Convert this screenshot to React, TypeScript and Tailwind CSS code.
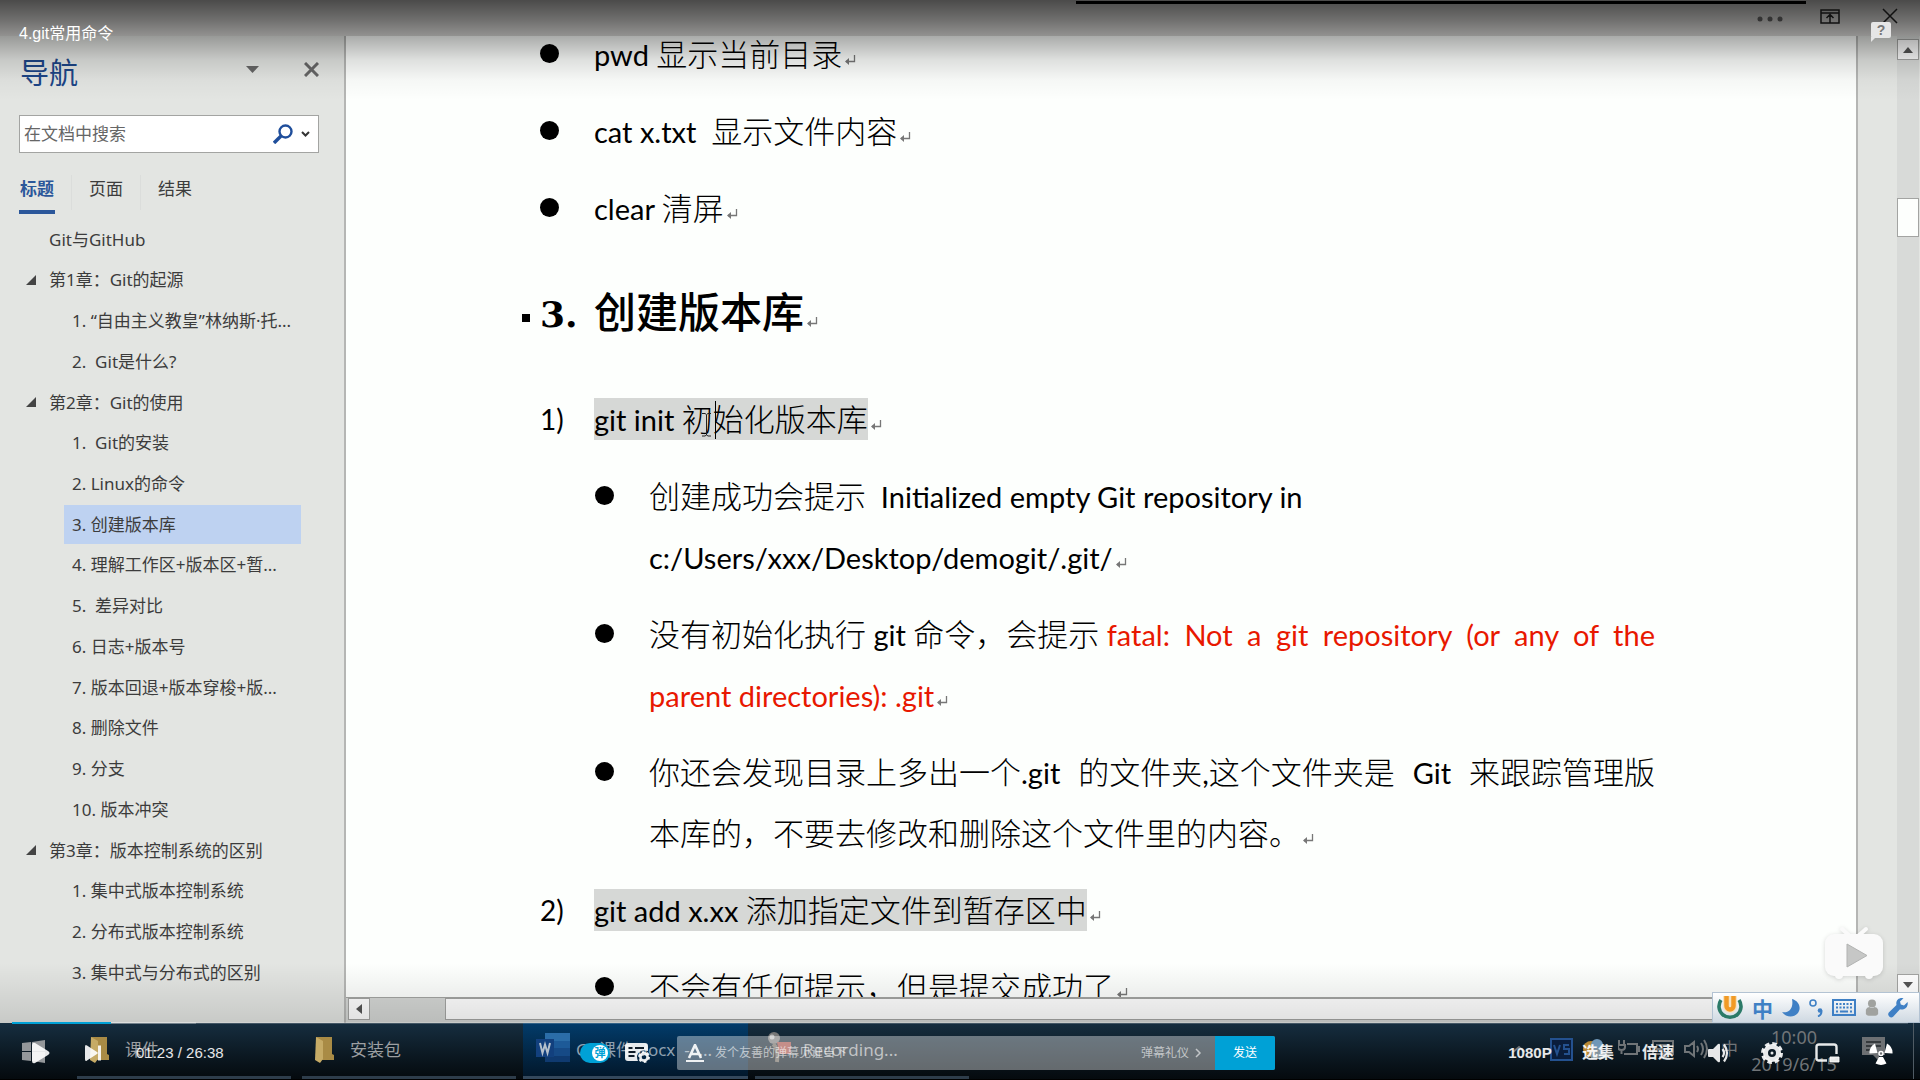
import type { ReactNode } from "react";

type Heading = { level: 1 | 2; text: string; open?: boolean; active?: boolean };

const headings: Heading[] = [
  { level: 1, text: "Git与GitHub" },
  { level: 1, text: "第1章：Git的起源", open: true },
  { level: 2, text: "1. “自由主义教皇”林纳斯·托..." },
  { level: 2, text: "2.  Git是什么?" },
  { level: 1, text: "第2章：Git的使用", open: true },
  { level: 2, text: "1.  Git的安装" },
  { level: 2, text: "2. Linux的命令" },
  { level: 2, text: "3. 创建版本库", active: true },
  { level: 2, text: "4. 理解工作区+版本区+暂..." },
  { level: 2, text: "5.  差异对比" },
  { level: 2, text: "6. 日志+版本号" },
  { level: 2, text: "7. 版本回退+版本穿梭+版..." },
  { level: 2, text: "8. 删除文件" },
  { level: 2, text: "9. 分支" },
  { level: 2, text: "10. 版本冲突" },
  { level: 1, text: "第3章：版本控制系统的区别", open: true },
  { level: 2, text: "1. 集中式版本控制系统" },
  { level: 2, text: "2. 分布式版本控制系统" },
  { level: 2, text: "3. 集中式与分布式的区别" },
];

function ReturnMark() {
  return (
    <svg className="ml-0.5 inline-block align-baseline" width="12" height="12" viewBox="0 0 12 12" fill="none" stroke="#777" strokeWidth="1.3" aria-hidden="true">
      <path d="M10.5 1v6.5H2" />
      <path d="M5 4 1 7.5 5 11z" fill="#777" stroke="none" />
    </svg>
  );
}

function En({ children }: { children: ReactNode }) {
  return <span className="text-[29px] leading-none whitespace-pre-wrap">{children}</span>;
}

function Dot({ children, nested }: { children: ReactNode; nested?: boolean }) {
  return (
    <li className={nested ? "flex pl-[55px]" : "flex"}>
      <span className="flex h-[58px] w-[54px] shrink-0 items-center">
        <span className="size-[19px] rounded-full bg-black" />
      </span>
      <div className="min-w-0 flex-1 whitespace-nowrap">{children}</div>
    </li>
  );
}

function Numbered({ n, children }: { n: string; children: ReactNode }) {
  return (
    <li className="flex h-[61px]">
      <span className="w-[54px] shrink-0 text-[28px]">{n}</span>
      <div className="whitespace-nowrap">{children}</div>
    </li>
  );
}

function Sidebar() {
  return (
    <aside className="flex w-[346px] shrink-0 flex-col border-r-2 border-[#b5b6b4] bg-[#e3e5e2] font-['Noto_Sans','Noto_Sans_CJK_SC',sans-serif] text-[17px] text-[#3c3c3c]">
      <div className="flex items-center pt-4 pr-[25px] pl-5">
        <h2 className="flex-1 text-[29px] leading-[42px] text-[#1c4587]">导航</h2>
        <button aria-label="选项" className="mb-1.5 mr-[45px]">
          <svg width="13" height="8" viewBox="0 0 13 8" fill="#666"><path d="M0 0h13L6.500 7z" /></svg>
        </button>
        <button aria-label="关闭" className="mb-2">
          <svg width="15" height="15" viewBox="0 0 15 15" stroke="#666" strokeWidth="3"><path d="m1 1 13 13M14 1 1 14" /></svg>
        </button>
      </div>
      <div className="mt-[21px] mr-[25px] ml-[19px] flex h-[38px] items-center border border-[#a3a4a2] bg-white pr-2 pl-1">
        <input aria-label="在文档中搜索" placeholder="在文档中搜索" className="min-w-0 flex-1 bg-transparent outline-none placeholder:text-[#666]" />
        <button aria-label="搜索">
          <svg width="20" height="20" viewBox="0 0 20 20" fill="none" stroke="#1f4e9b"><circle cx="12.500" cy="7.500" r="6" strokeWidth="2.400" /><path d="m8 12-7 7" strokeWidth="3.400" /></svg>
        </button>
        <button aria-label="搜索选项" className="ml-2">
          <svg width="9" height="7" viewBox="0 0 9 7" fill="none" stroke="#333" strokeWidth="2"><path d="m1 1 3.500 3.500L8 1" /></svg>
        </button>
      </div>
      <div role="tablist" className="mt-[22px] flex pl-[19px]">
        <button role="tab" aria-selected="true" className="h-[39px] w-9 border-b-4 border-[#2b579a] pb-2 font-bold text-[#2b579a]">标题</button>
        <button role="tab" aria-selected="false" className="ml-4 h-[35px] border-x border-[#dbdddb] px-[17px] pb-2">页面</button>
        <button role="tab" aria-selected="false" className="h-[35px] px-[17px] pb-2">结果</button>
      </div>
      <ul className="mt-[5px] mb-[30px] flex flex-1 flex-col">
        {headings.map((h) => (
          <li key={h.text} className="flex flex-1 items-center">
            {h.level === 1 ? (
              <a href="#doc" className="flex items-center whitespace-pre">
                <span className="flex w-[49px] pl-[26px]">
                  {h.open && <svg width="10" height="10" viewBox="0 0 10 10" fill="#444"><path d="M10 0v10H0z" /></svg>}
                </span>
                {h.text}
              </a>
            ) : (
              <a href="#doc" className={h.active ? "ml-16 flex h-[39px] w-[237px] items-center bg-[#bed2f1] pl-2 whitespace-pre" : "ml-16 pl-2 whitespace-pre"}>
                {h.text}
              </a>
            )}
          </li>
        ))}
      </ul>
    </aside>
  );
}

function Doc() {
  return (
    <main id="doc" className="min-h-0 flex-1 overflow-hidden bg-[#fdfffd] pr-[201px] pl-[194px] font-['Lato','Noto_Sans_CJK_SC',sans-serif] text-[31px] leading-[61px] font-light text-black [&_span]:font-normal">
      <div className="-mt-3">
        <ul className="flex flex-col gap-4">
          <Dot><En>pwd </En>显示当前目录<ReturnMark /></Dot>
          <Dot><En>cat x.txt  </En>显示文件内容<ReturnMark /></Dot>
          <Dot><En>clear </En>清屏<ReturnMark /></Dot>
        </ul>
        <h1 className="mt-4 -ml-[18px] flex h-[118px] items-center font-['Liberation_Serif','Noto_Sans_CJK_SC',serif] text-[42px] leading-[118px] font-bold">
          <span className="mt-2 mr-[10px] size-2 bg-black" />
          <span className="w-[54px] font-['DejaVu_Serif',serif] text-[36px] font-bold!">3.</span>
          <div className="font-medium">创建版本库<ReturnMark /></div>
        </h1>
        <ol className="mt-4 flex flex-col gap-4">
          <Numbered n="1)">
            <mark className="relative inline-block bg-[#d6d8d6] leading-[42px] text-black">
              <En>git init </En>初
              <i className="absolute top-[3px] left-[121px] h-[38px] w-px bg-black" />
              <svg className="absolute top-[15px] left-[108px]" width="9" height="24" viewBox="0 0 9 24" fill="none" stroke="#222"><path d="M0 .5h3l1.500 1 1.500-1h3M4.500 2v20M0 23h3l1.500-1 1.500 1h3" /></svg>
              始化版本库
            </mark>
            <ReturnMark />
          </Numbered>
          <Dot nested>
            创建成功会提示<En>  Initialized empty Git repository in</En><br />
            <En>c:/Users/xxx/Desktop/demogit/.git/</En><ReturnMark />
          </Dot>
          <Dot nested>
            <div className="flex">
              <div className="whitespace-pre">没有初始化执行<En> git </En>命令，会提示<En> </En></div>
              <div className="flex-1 text-[29px] font-normal whitespace-normal text-[#e81800] [text-align-last:justify]">fatal: Not a git repository (or any of the</div>
            </div>
            <span className="text-[#e81800]"><En>parent directories): .git</En></span><ReturnMark />
          </Dot>
          <Dot nested>
            <div className="flex justify-between">
              <div>你还会发现目录上多出一个<En>.git</En></div>
              <div>的文件夹<En>,</En>这个文件夹是</div>
              <div><En>Git</En></div>
              <div>来跟踪管理版</div>
            </div>
            本库的，不要去修改和删除这个文件里的内容。<ReturnMark />
          </Dot>
          <Numbered n="2)">
            <mark className="inline-block bg-[#d6d8d6] leading-[42px] text-black"><En>git add x.xx </En>添加指定文件到暂存区中</mark>
            <ReturnMark />
          </Numbered>
          <Dot nested>不会有任何提示，但是提交成功了<ReturnMark /></Dot>
        </ol>
      </div>
    </main>
  );
}

function VerticalScroll() {
  return (
    <div className="flex w-[64px] shrink-0 justify-end border-l-2 border-[#b5b6b4] bg-[#e3e5e2] pr-px">
      <div className="flex w-[22px] flex-col bg-[#d8dad8]">
        <button aria-label="向上滚动" className="mt-[3px] flex h-[21px] items-center justify-center border border-[#a3a4a2] bg-white">
          <svg width="10" height="6" viewBox="0 0 10 6" fill="#555"><path d="m5 0 5 6H0z" /></svg>
        </button>
        <div className="mt-[138px] h-[39px] border border-[#a3a4a2] bg-[#fdfffd]" />
        <div className="flex-1" />
        <button aria-label="向下滚动" className="mb-[28px] flex h-[21px] items-center justify-center border border-[#a3a4a2] bg-white">
          <svg width="10" height="6" viewBox="0 0 10 6" fill="#555"><path d="m0 0h10L5 6z" /></svg>
        </button>
      </div>
    </div>
  );
}

function ImeBar() {
  return (
    <div className="absolute right-0 bottom-[57px] flex h-[31px] w-[208px] items-center justify-between border border-[#b3c3d3] bg-linear-to-b from-white to-[#cfd9e2] pr-[11px] pl-1 text-[#3f80c5]">
      <svg width="26" height="26" viewBox="0 0 26 26" fill="none">
        <path d="M4 5a11 11 0 1 0 18 0" stroke="#2b7a68" strokeWidth="3.600" />
        <path d="M9.500 1v10a3.500 3.500 0 0 0 7 0V1" stroke="#f7e3c0" strokeWidth="7" />
        <path d="M9.500 1v10a3.500 3.500 0 0 0 7 0V1" stroke="#f19a26" strokeWidth="4.500" />
      </svg>
      <span className="font-['Noto_Sans_CJK_SC',sans-serif] text-[21px] leading-6 font-bold">中</span>
      <svg width="18" height="18" viewBox="0 0 18 18" fill="currentColor"><path d="M10 0c7 2 10 9 5.500 14.500C11.500 19 4 18.500 0 13c6 1.500 12-3 10-13z" /></svg>
      <svg width="14" height="18" viewBox="0 0 14 18" fill="none" stroke="currentColor"><circle cx="4" cy="4" r="3" strokeWidth="1.600" /><circle cx="11" cy="11.500" r="2.300" fill="currentColor" stroke="none" /><path d="M12.500 11.500q.500 4-3.500 6" strokeWidth="1.800" /></svg>
      <svg width="24" height="17" viewBox="0 0 24 17" fill="none" stroke="currentColor" strokeWidth="2"><path d="M1 1h22v15H1z" /><path d="M4 5h16M4 8.500h16" strokeDasharray="2 1.500" /><path d="M4 12.500h2M8 12.500h8M18 12.500h2" /></svg>
      <svg width="14" height="19" viewBox="0 0 16 19" fill="#a0a29f"><circle cx="8" cy="5" r="4.600" /><path d="M1 12q1-3 4-3 3 2 6 0 3 0 4 3v5q-1 2-3 2H4q-2 0-3-2z" /></svg>
      <svg width="20" height="20" viewBox="0 0 20 20" fill="currentColor"><path d="M14 0c-4 0-6.500 3-5.500 7L.8 14.500q-1.500 2 .4 3.900 2 1.800 3.900.3L12 11.300c5 1.200 8.500-2.800 7.600-7.300L16 7.500 12.800 6.500 12 3.500 15.500.3z" /></svg>
    </div>
  );
}

function Folder() {
  return (
    <svg width="20" height="28" viewBox="0 0 20 28"><path d="M1 1h16v17l2 1v5H6z" fill="#a98b45" /><path d="M1 1l7 4v18l-3 4-5-3z" fill="#c6ab66" /></svg>
  );
}

function Taskbar() {
  return (
    <footer className="flex h-[57px] shrink-0 border-b border-black bg-linear-to-b from-[#162e40] to-[#050a0e] font-['Noto_Sans','Noto_Sans_CJK_SC',sans-serif] text-[17px] text-[#9c9fa1]">
      <button aria-label="开始" className="w-[77px] pl-[22px]">
        <svg width="23" height="23" viewBox="0 0 23 23" fill="#94979a"><path d="M0 3 9 2v9H0zM10 1.900 23 0v11H10zM0 12h9v9l-9-1zM10 12h13v11l-13-2z" /></svg>
      </button>
      <button className="mr-[11px] flex w-[214px] items-center border-b-3 border-[#2e3d4b] pl-[13px]"><Folder /><span className="ml-[15px]">课件</span></button>
      <button className="mr-[7px] flex w-[214px] items-center border-b-3 border-[#2e3d4b] pl-[13px]"><Folder /><span className="ml-[15px]">安装包</span></button>
      <button className="mr-[7px] flex w-[225px] items-center border-b-3 border-[#34485c] bg-linear-to-b from-[#023c6b] to-[#02182c] pl-[13px] text-[#8fa0b0]">
        <svg className="mb-1" width="36" height="30" viewBox="0 0 36 30"><path d="M9 0h25v8H9z" fill="#2b6da8" /><path d="M9 8h25v7H9z" fill="#1d5a98" /><path d="M9 15h25v8H9z" fill="#164a86" /><path d="M9 23h25v6H9z" fill="#0f3a70" /><path d="M0 6h18v18H0z" fill="#12407e" /><path d="m4 10 2.500 10L9 11.500 11.500 20 14 10" fill="none" stroke="#b5c0cc" strokeWidth="2" /></svg>
        <span className="ml-1 whitespace-pre">Git课件.docx  -  ...</span>
      </button>
      <button className="flex w-[214px] items-center border-b-3 border-[#2e3d4b] pl-[10px]">
        <svg className="mb-1" width="28" height="32" viewBox="0 0 28 32" fill="none"><circle cx="9" cy="6" r="6" fill="#777" /><circle cx="7" cy="5" r="2.500" fill="#bbb" /><path d="M8 12q6 4 4 18" stroke="#6d665d" strokeWidth="4" /><path d="M12 10h14v12H14z" fill="#a04a42" /></svg>
        <span className="ml-[10px]">Recording...</span>
      </button>
      <div className="flex-1" />
      <div className="flex items-center pb-1 text-[#707477]">
        <svg className="mr-6" width="14" height="8" viewBox="0 0 14 8" fill="none" stroke="currentColor" strokeWidth="2"><path d="m1 7 6-5 6 5" /></svg>
        <svg className="mr-[10px]" width="23" height="23" viewBox="0 0 23 23" fill="#0a1d3c" stroke="#24518f" strokeWidth="2"><path d="M1 1h21v21H1z" /><path d="m4 7 3 9 3-9M19 7h-5v4h5v5h-5" /></svg>
        <svg className="mr-3" width="23" height="22" viewBox="0 0 23 22"><circle cx="8" cy="11" r="8" fill="#b98a35" /><circle cx="14" cy="7" r="6" fill="#6f97b8" /><path d="M8 20q-3-7 3-8 5-5 8 1 4 0 4 4t-4 4H8z" fill="#82939e" /></svg>
        <svg className="mr-3" width="22" height="18" viewBox="0 0 22 18" fill="none" stroke="currentColor" strokeWidth="2"><path d="M1 0v4M6 0v4M0 5h7v2q0 3-3.500 3T0 7zM3.500 10v4M9 4h10v10H6M19 7h2v4h-2" /></svg>
        <svg className="mr-[10px]" width="22" height="18" viewBox="0 0 22 18" fill="none" stroke="currentColor" strokeWidth="2"><path d="M1 1h20v13H1zM4 5h14M4 9h14M7 17h8" /></svg>
        <svg className="mr-3" width="25" height="20" viewBox="0 0 25 20" fill="none" stroke="currentColor" strokeWidth="2"><path d="M1 7h4l5-4v14l-5-4H1zM13 7q2 3 0 6M17 4q4 6 0 12M20 1q6 9 0 18" /></svg>
        <span className="text-[17px]">中</span>
        <div className="mt-1 flex w-[112px] flex-col items-center text-[18px] leading-[27px]"><span>10:00</span><span>2019/6/15</span></div>
        <svg className="mr-[28px] ml-[12px]" width="23" height="24" viewBox="0 0 23 24"><path d="M0 0h23v18h-6v6l-6-6H0z" fill="#6d7073" /><path d="M4 5h15M4 9h15M4 13h9" stroke="#25292d" strokeWidth="1.500" /></svg>
      </div>
      <div className="w-[7px] border-l border-[#4f5b64]" />
    </footer>
  );
}

function PlayerControls() {
  return (
    <div className="absolute inset-x-0 bottom-0 font-['Liberation_Sans','Noto_Sans_CJK_SC',sans-serif] text-white/90">
      <div className="mx-3 h-0.5 bg-white/20">
        <div className="h-full w-[184px] bg-white/25">
          <div className="h-full w-[99px] bg-[#00a1d6]" />
        </div>
      </div>
      <div className="flex h-14 items-center pb-0.5">
        <div className="flex w-[580px] items-center pl-8">
          <button aria-label="播放" className="mt-1"><svg width="18" height="22" viewBox="0 0 18 22" fill="currentColor"><path d="M0 3q0-3 3-2l13 8q3 2 0 4L3 21q-3 1-3-2z" /></svg></button>
          <button aria-label="下一个" className="mt-1 ml-[35px]"><svg width="16" height="16" viewBox="0 0 16 16" fill="currentColor"><path d="M0 2q0-3 2-1.500L12 7q1.500 1 0 2L2 15.500Q0 17 0 14zM13 .5h3v15h-3z" /></svg></button>
          <span className="mt-1 ml-[35px] text-[15px] whitespace-pre">01:23 / 26:38</span>
        </div>
        <label className="mt-1 flex h-5 w-[30px] cursor-pointer items-center justify-end rounded-full bg-[#00a1d6] p-0.5 text-[11px] text-[#00a1d6]">
          <input type="checkbox" defaultChecked aria-label="弹幕" className="sr-only" />
          <span className="flex size-4 items-center justify-center rounded-full bg-white leading-4 font-bold">弹</span>
        </label>
        <button aria-label="弹幕设置" className="mt-1 ml-[15px]">
          <svg width="26" height="20" viewBox="0 0 26 20"><path d="M3 0h17q3 0 3 3v5q-9-2-11 5 0 3 1 5H3q-3 0-3-3V3q0-3 3-3z" fill="currentColor" /><path d="M3.500 5h4M10 5h9M3.500 9h7M3.500 13h6" stroke="#101c28" strokeWidth="2" /><circle cx="19" cy="14" r="3.600" fill="none" stroke="currentColor" strokeWidth="2.600" /><circle cx="19" cy="14" r="5" fill="none" stroke="currentColor" strokeWidth="2" strokeDasharray="2.600 2.600" /></svg>
        </button>
        <div className="mt-1 ml-[26px] flex h-[34px] w-[598px] items-center overflow-hidden rounded-xs bg-white/38 pl-[9px] text-xs">
          <button aria-label="字体"><svg width="18" height="18" viewBox="0 0 18 18" fill="none" stroke="currentColor"><path d="M3 14 9 1l6 13M5 10h8" strokeWidth="2.600" /><path d="M0 17h18" strokeWidth="2" /></svg></button>
          <input aria-label="发送弹幕" placeholder="发个友善的弹幕见证当下" className="ml-[11px] min-w-0 flex-1 bg-transparent outline-none placeholder:text-white/60" />
          <a href="#etiquette" className="flex items-center text-white/60">弹幕礼仪
            <svg className="mr-[13px] ml-1.5" width="7" height="10" viewBox="0 0 7 10" fill="none" stroke="currentColor" strokeWidth="1.500"><path d="m1 1 4 4-4 4" /></svg>
          </a>
          <button className="h-full w-[60px] bg-[#00a1d6] text-white">发送</button>
        </div>
        <div className="flex-1" />
        <div className="flex items-center pt-1 pr-[27px] text-base font-bold">
          <button className="w-[60px] text-center text-[15px]">1080P</button>
          <button className="ml-[22px]">选集</button>
          <button className="ml-7">倍速</button>
          <button aria-label="音量" className="ml-[34px]"><svg width="21" height="20" viewBox="0 0 21 20" fill="currentColor"><path d="M0 7q0-1 1-1h4l5-5q2-1 2 1v16q0 2-2 1l-5-5H1q-1 0-1-1z" /><path d="M14.500 6q3 4 0 8M16 1.500q6 8.500 0 17" fill="none" stroke="currentColor" strokeWidth="2.200" /></svg></button>
          <button aria-label="设置" className="ml-8"><svg width="22" height="22" viewBox="0 0 22 22" fill="none" stroke="currentColor"><circle cx="11" cy="11" r="6.500" strokeWidth="5" /><circle cx="11" cy="11" r="9.500" strokeWidth="3" strokeDasharray="4.500 2.960" /><circle cx="11" cy="11" r="1.500" fill="currentColor" stroke="none" /></svg></button>
          <button aria-label="画中画" className="ml-8"><svg width="25" height="20" viewBox="0 0 25 20" fill="none" stroke="currentColor" strokeWidth="2.400"><path d="M12 17.500H4q-2.500 0-2.500-2.500V4Q1.500 1.500 4 1.500h15Q21.500 1.500 21.500 4v7" /><path d="M15 14h9v5h-9z" fill="currentColor" strokeWidth="1" /></svg></button>
          <button aria-label="全屏" className="ml-[29px] text-white">
            <svg width="24" height="23" viewBox="0 0 24 23" fill="currentColor"><circle cx="12" cy="11.500" r="2" fill="none" stroke="currentColor" strokeWidth="1.500" /><path d="M8.500 11 .5 11.500Q0 5 6 1.500zM15.500 11l8 .5Q24 5 18 1.500zM10 15h4l3.500 6.500q-5.500 2.800-11 0z" /></svg>
          </button>
        </div>
      </div>
    </div>
  );
}

export default function App() {
  return (
    <div className="relative flex h-screen flex-col overflow-hidden bg-[#e3e5e2]">
      <header className="relative h-9 shrink-0 bg-[#dbdad8]">
        <div className="absolute top-px right-[114px] h-[3px] w-[730px] bg-black" />
      </header>
      <div className="flex min-h-0 flex-1">
        <Sidebar />
        <div className="flex min-w-0 flex-1 flex-col">
          <div className="flex min-h-0 flex-1">
            <div className="flex min-w-0 flex-1 flex-col">
              <Doc />
              <div className="flex h-[26px] shrink-0 border-t border-[#a3a4a2] bg-[#d4d6d4] pb-[3px] pl-[2px]">
                <button aria-label="向左滚动" className="flex w-[22px] items-center justify-center border border-[#a3a4a2] bg-white">
                  <svg width="6" height="10" viewBox="0 0 6 10" fill="#555"><path d="M6 0v10L0 5z" /></svg>
                </button>
                <div className="ml-[75px] flex-1 border border-[#a3a4a2] bg-white" />
              </div>
            </div>
            <VerticalScroll />
          </div>
        </div>
      </div>
      <Taskbar />

      <div className="pointer-events-none absolute inset-x-0 top-0 h-[100px] bg-[linear-gradient(to_bottom,rgba(0,0,0,.66)_0,rgba(0,0,0,.49)_20px,rgba(0,0,0,.32)_37px,rgba(0,0,0,.12)_60px,rgba(0,0,0,.03)_80px,transparent_100px)]" />
      <div className="pointer-events-none absolute inset-x-0 bottom-[57px] h-[60px] bg-linear-to-t from-black/12 to-transparent" />
      <div className="absolute top-2 right-[22px] flex items-center">
        <svg className="mt-1.5" width="26" height="6" viewBox="0 0 26 6" fill="#333"><circle cx="3" cy="3" r="2.500" /><circle cx="13" cy="3" r="2.500" /><circle cx="23" cy="3" r="2.500" /></svg>
        <button aria-label="功能区显示选项" className="ml-[37px]"><svg width="20" height="15" viewBox="0 0 20 15" fill="none" stroke="#111" strokeWidth="1.500"><path d="M1 1h18v13H1zM1 4h18M10 14V6M6.500 9 10 5.500 13.500 9" /></svg></button>
        <button aria-label="关闭窗口" className="ml-[42px]"><svg width="16" height="16" viewBox="0 0 16 16" stroke="#111" strokeWidth="1.500"><path d="m1 1 14 14M15 1 1 15" /></svg></button>
      </div>
      <p className="absolute top-[22px] left-[19px] font-['Liberation_Sans','Noto_Sans_CJK_SC',sans-serif] text-base leading-6 text-white">4.git常用命令</p>
      <button aria-label="帮助" className="absolute top-[22px] right-[29px] h-[16px] w-5 rounded-xs bg-[#e6e6e6] font-['Liberation_Sans',sans-serif] text-sm leading-4 font-bold text-[#777]">
        ?
        <svg className="absolute top-[15px] left-0" width="5" height="5" viewBox="0 0 5 5" fill="#e6e6e6"><path d="M0 0h5L0 5z" /></svg>
      </button>
      <svg className="absolute right-[35px] bottom-[99px] drop-shadow-sm" width="62" height="56" viewBox="0 0 62 56" aria-hidden="true">
        <path d="m19 4 9 8M43 4l-9 8" stroke="#fafafa" strokeWidth="4" strokeLinecap="round" />
        <circle cx="16" cy="50" r="4" fill="#fafafa" /><circle cx="46" cy="50" r="4" fill="#fafafa" />
        <rect x="2" y="9" width="58" height="42" rx="9" fill="#fafafa" />
        <path d="m24 19 20 11.500L24 42z" fill="#c6c7c6" stroke="#b2b3b2" />
      </svg>
      <ImeBar />
      <PlayerControls />
    </div>
  );
}
